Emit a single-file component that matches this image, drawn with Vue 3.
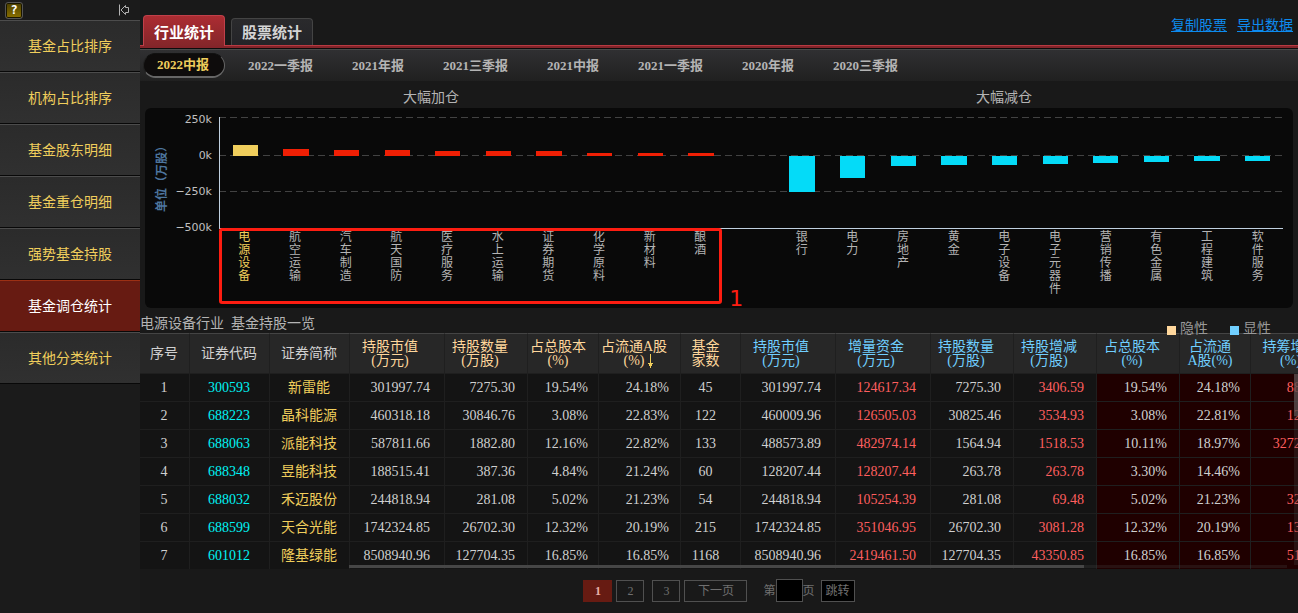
<script setup>
import { ref } from 'vue'

const menu = ['基金占比排序', '机构占比排序', '基金股东明细', '基金重仓明细', '强势基金持股', '基金调仓统计', '其他分类统计']
const activeMenu = ref('基金调仓统计')

const tabs = ['行业统计', '股票统计']
const activeTab = ref('行业统计')

const periods = ['2022中报', '2022一季报', '2021年报', '2021三季报', '2021中报', '2021一季报', '2020年报', '2020三季报']
const activePeriod = ref('2022中报')

const ticks = ['250k', '0k', '−250k', '−500k']
const gridLines = [0, 38, 74]

const slots = [
  { name: '电源设备', v: 11, on: true },
  { name: '航空运输', v: 7 },
  { name: '汽车制造', v: 6 },
  { name: '航天国防', v: 6 },
  { name: '医疗服务', v: 5 },
  { name: '水上运输', v: 5 },
  { name: '证券期货', v: 5 },
  { name: '化学原料', v: 3 },
  { name: '新材料', v: 3 },
  { name: '酿酒', v: 3 },
  { name: '', v: 0 },
  { name: '银行', v: -36 },
  { name: '电力', v: -22 },
  { name: '房地产', v: -10 },
  { name: '黄金', v: -9 },
  { name: '电子设备', v: -9 },
  { name: '电子元器件', v: -8 },
  { name: '营销传播', v: -7 },
  { name: '有色金属', v: -6 },
  { name: '工程建筑', v: -5 },
  { name: '软件服务', v: -5 },
]

const columns = [
  { k: 'c-no', a: '序号' },
  { k: 'c-code', a: '证券代码' },
  { k: 'c-name', a: '证券简称' },
  { k: 'c-value hid', a: '持股市值', b: '(万元)' },
  { k: 'c-qty hid', a: '持股数量', b: '(万股)' },
  { k: 'c-pct hid', a: '占总股本', b: '(%)' },
  { k: 'c-float hid', a: '占流通A股', b: '(%)', sort: true },
  { k: 'c-funds hid', a: '基金', b: '家数' },
  { k: 'c-value vis', a: '持股市值', b: '(万元)' },
  { k: 'c-value vis rise', a: '增量资金', b: '(万元)' },
  { k: 'c-qty vis', a: '持股数量', b: '(万股)' },
  { k: 'c-qty vis rise', a: '持股增减', b: '(万股)' },
  { k: 'c-total vis deep', a: '占总股本', b: '(%)' },
  { k: 'c-pct vis deep', a: '占流通', b: 'A股(%)' },
  { k: 'c-chips vis deep rise', a: '持筹增减', b: '(%)' },
]

const rows = [
  ['1', '300593', '新雷能', '301997.74', '7275.30', '19.54%', '24.18%', '45', '301997.74', '124617.34', '7275.30', '3406.59', '19.54%', '24.18%', '88.05%'],
  ['2', '688223', '晶科能源', '460318.18', '30846.76', '3.08%', '22.83%', '122', '460009.96', '126505.03', '30825.46', '3534.93', '3.08%', '22.81%', '12.95%'],
  ['3', '688063', '派能科技', '587811.66', '1882.80', '12.16%', '22.82%', '133', '488573.89', '482974.14', '1564.94', '1518.53', '10.11%', '18.97%', '3272.05%'],
  ['4', '688348', '昱能科技', '188515.41', '387.36', '4.84%', '21.24%', '60', '128207.44', '128207.44', '263.78', '263.78', '3.30%', '14.46%', ''],
  ['5', '688032', '禾迈股份', '244818.94', '281.08', '5.02%', '21.23%', '54', '244818.94', '105254.39', '281.08', '69.48', '5.02%', '21.23%', '32.84%'],
  ['6', '688599', '天合光能', '1742324.85', '26702.30', '12.32%', '20.19%', '215', '1742324.85', '351046.95', '26702.30', '3081.28', '12.32%', '20.19%', '13.04%'],
  ['7', '601012', '隆基绿能', '8508940.96', '127704.35', '16.85%', '16.85%', '1168', '8508940.96', '2419461.50', '127704.35', '43350.85', '16.85%', '16.85%', '51.39%'],
]
const jump = ref('')
</script>

<template>
  <div class="app">
    <aside class="side">
      <div class="side-top">
        <button class="help" aria-label="帮助">?</button>
        <button class="fold" aria-label="收起">
          <svg width="12" height="12" viewBox="0 0 12 12" fill="none" stroke="#b4b4b4">
            <path d="M1.500 0.500v11M3 6l4.500-4.500v2h3v5h-3v2z" />
          </svg>
        </button>
      </div>
      <nav>
        <a v-for="m in menu" :key="m" href="#" :class="{ on: m === activeMenu }" @click.prevent="activeMenu = m">{{ m }}</a>
      </nav>
    </aside>

    <main class="main">
      <header class="top">
        <div class="tabs">
          <button v-for="t in tabs" :key="t" :class="{ on: t === activeTab }" @click="activeTab = t">{{ t }}</button>
        </div>
        <div class="links"><a href="#">复制股票</a><a href="#">导出数据</a></div>
      </header>

      <div class="periods">
        <button v-for="p in periods" :key="p" :class="{ on: p === activePeriod }" @click="activePeriod = p">{{ p }}</button>
      </div>

      <div class="titles"><span>大幅加仓</span><span>大幅减仓</span></div>

      <section class="chart">
        <div class="unit">单位（万股）</div>
        <div class="ticks"><span v-for="t in ticks" :key="t">{{ t }}</span></div>
        <div class="plot">
          <svg class="grid" width="100%" height="111">
            <line v-for="y in gridLines" :key="y" x1="0" x2="100%" :y1="y + 0.5" :y2="y + 0.5" />
          </svg>
          <div class="bars">
            <div v-for="(s, i) in slots" :key="i" class="slot">
              <div class="up"><i v-if="s.v > 0" :class="{ on: s.on }" :style="{ height: s.v + 'px' }"></i></div>
              <div class="down"><i v-if="s.v < 0" :style="{ height: -s.v + 'px' }"></i></div>
            </div>
          </div>
          <div class="names">
            <div v-for="(s, i) in slots" :key="i" class="slot"><span :class="{ on: s.on }">{{ s.name }}</span></div>
          </div>
          <div class="mark"><b>1</b></div>
        </div>
      </section>

      <div class="caption">
        <span>电源设备行业&nbsp; 基金持股一览</span>
        <div class="legend"><span class="l-hid">隐性</span><span class="l-vis">显性</span></div>
      </div>

      <div class="table-wrap">
        <table>
          <thead>
            <tr>
              <th v-for="(c, i) in columns" :key="i" :class="c.k" scope="col">
                {{ c.a }}<template v-if="c.b"><br>{{ c.b }}</template>
                <svg v-if="c.sort" class="sort" width="7" height="14" viewBox="0 0 7 14"><path d="M3 0h1v9h2v1h-1v2h-1v2h-1v-2h-1v-2h-1v-1h2z" fill="#f0ce5c" /></svg>
              </th>
            </tr>
          </thead>
          <tbody>
            <tr v-for="r in rows" :key="r[0]">
              <td v-for="(c, i) in columns" :key="i" :class="c.k">{{ r[i] }}</td>
            </tr>
          </tbody>
        </table>
        <div class="h-track"><div class="h-thumb"></div></div>
        <div class="v-track"><div class="v-thumb"></div></div>
      </div>

      <footer class="pager">
        <button class="on">1</button>
        <button>2</button>
        <button class="third">3</button>
        <button class="next">下一页</button>
        <label>第<input v-model="jump" type="text" aria-label="页码">页</label>
        <button class="go">跳转</button>
      </footer>
    </main>
  </div>
</template>

<style>
body { background: #191919; }
</style>

<style scoped>
.app {
  display: flex;
  min-height: 100vh;
  overflow: hidden;
  background: #191919;
  color: #b4b4b4;
  font: 14px/20px "Liberation Serif", "Noto Sans CJK SC", sans-serif;
}
.app * { box-sizing: border-box; }
button { margin: 0; padding: 0; font: inherit; color: inherit; cursor: pointer; }

.side { flex: 0 0 140px; background: #1b1b1b; }
.side-top { display: flex; justify-content: space-between; align-items: center; height: 20px; padding: 0 10px 0 5px; }
.help {
  width: 18px; height: 17px;
  border: 1px solid #555;
  border-radius: 3px;
  background: linear-gradient(#4c4000, #8a7000);
  box-shadow: inset 0 0 0 1px #1a1600;
  color: #fff;
  font: bold 12px/15px "DejaVu Sans Mono", monospace;
}
.fold { display: flex; border: 0; background: none; }
.side nav { display: flex; flex-direction: column; }
.side nav a {
  height: 52px;
  border-top: 1px solid #4c4c4c;
  border-bottom: 1px solid #080808;
  background: linear-gradient(#2b2b2b, #303030);
  color: #f0ce5c;
  line-height: 52px;
  text-align: center;
  text-decoration: none;
}
.side nav a.on { border-top-color: #9c3014; background: #671b12; color: #fff; }

.main { flex: 1; min-width: 0; }
.top {
  display: flex;
  justify-content: space-between;
  height: 49px;
  padding: 0 5px 0 3px;
  border-bottom: 1px solid #0c0c0c;
  box-shadow: inset 0 -2px #84242a, inset 0 -3px #b83a42;
}
.tabs { display: flex; align-items: flex-end; gap: 6px; padding-bottom: 3px; }
.tabs button {
  width: 82px; height: 27px;
  border: 1px solid #444;
  border-bottom: 0;
  border-radius: 4px 4px 0 0;
  background: linear-gradient(#2a2a2c, #242428);
  color: #d4d4d4;
  font: bold 15px/26px "Noto Sans CJK SC", sans-serif;
}
.tabs button.on {
  height: 31px;
  margin-bottom: -1px;
  border-color: #c0404a;
  background: linear-gradient(#ac2c32, #84262a);
  color: #fff;
  line-height: 32px;
}
.links { display: flex; gap: 10px; padding-top: 16px; }
.links a { color: #0d8bee; }

.periods {
  display: flex;
  align-items: center;
  gap: 9px;
  height: 32px;
  padding: 0 3px;
  border-top: 1px solid #4a4a4a;
  background: linear-gradient(#303032, #202020);
}
.periods button {
  height: 25px;
  padding: 0 15px 0 13px;
  border: 1px solid transparent;
  border-radius: 13px;
  background: none;
  font: bold 13px/22px "Liberation Serif", "Noto Sans CJK SC", sans-serif;
}
.periods button.on { border-color: #111 #666 #666 #222; border-bottom-width: 2px; background: #0e0c0c; color: #f0ce5c; }

.titles { display: grid; grid-template-columns: 582fr 564fr; height: 27px; padding-right: 12px; line-height: 34px; text-align: center; }

.chart { display: flex; height: 200px; margin: 0 5px; padding: 9px 10px 0 9px; border-radius: 6px; background: #090909; }
.unit {
  width: 14px; height: 118px;
  writing-mode: vertical-rl;
  text-orientation: sideways;
  transform: rotate(180deg);
  text-align: center;
  color: #4d759e;
  font: bold 12px/14px "Noto Sans CJK SC", sans-serif;
}
.ticks { display: flex; flex: 0 0 44px; flex-direction: column; justify-content: space-between; height: 122px; margin-top: -4px; color: #c0c0c0; font: 11px/14px "DejaVu Sans", sans-serif; text-align: right; white-space: nowrap; }
.plot { position: relative; flex: 1; margin-left: 7px; }
.grid { position: absolute; left: 0; top: 0; }
.grid line { stroke: #424242; stroke-dasharray: 7 4; }
.bars, .names { position: relative; display: grid; grid-template-columns: repeat(21, 1fr); }
.bars { height: 112px; border-left: 1px solid #c0d0e0; border-bottom: 1px solid #c0d0e0; }
.up, .down { display: flex; justify-content: center; height: 39px; }
.up { align-items: flex-end; }
.down { height: 72px; }
.bars i { width: 50%; background: #f01f04; }
.bars i.on { background: #f0ce5c; }
.down i { background: #04dbf8; }
.names .slot { display: flex; justify-content: center; }
.names span { width: 12px; font: 12px/13px "Noto Sans CJK SC", sans-serif; word-break: break-all; }
.names .on { color: #f0ce5c; }
.mark { position: absolute; left: 0; top: 111px; width: 47.3%; height: 76px; border: 3px solid #fd1d11; border-radius: 3px; }
.mark b { position: absolute; left: 100%; bottom: -11px; margin-left: 10px; color: #fd1d11; font: 22px/26px "DejaVu Sans", sans-serif; }

.caption { position: relative; display: flex; justify-content: space-between; height: 25px; line-height: 32px; }
.legend { position: absolute; right: 27px; top: 11px; z-index: 1; display: flex; gap: 22px; line-height: 20px; }
.legend span { display: flex; align-items: center; gap: 4px; color: #999; }
.legend span::before { width: 9px; height: 9px; margin-top: 2px; background: #ffd79c; content: ""; }
.legend .l-vis::before { background: #70cfff; }

.table-wrap { position: relative; overflow: hidden; height: 236px; }
table { width: 1206px; border-spacing: 0; table-layout: fixed; }
th, td { padding: 0; border-right: 1px solid #1f1f1f; border-bottom: 1px solid #1f1f1f; white-space: nowrap; }
th {
  position: relative;
  height: 41px;
  border-top: 1px solid #444;
  background: #272727;
  color: #d0d0d0;
  font-weight: normal;
  line-height: 14px;
}
td { height: 28px; padding-top: 1px; background: #141414; color: #d0d0d0; line-height: 26px; text-align: right; }
.hid { width: 60px; }
th.hid { color: #ffd79c; }
th.vis { color: #70cfff; }
.c-no { width: 50px; padding-right: 1px; text-align: center; }
.c-code, .c-name { width: 80px; padding-right: 1px; text-align: center; }
td.c-code { color: #00f4f4; }
td.c-name { color: #f0ce5c; }
.c-value { width: 95px; padding-right: 14px; }
.c-qty { width: 83px; padding-right: 12px; }
.c-pct { width: 71px; padding-right: 10px; }
.c-float { width: 82px; padding-right: 11px; }
.c-funds { width: 60px; padding-right: 10px; text-align: center; }
.c-total { width: 83px; padding-right: 12px; }
.c-chips { width: 95px; padding-right: 15px; }
td.rise { color: #ff5f5f; }
td.deep { background: #1f0000; }
.sort { position: absolute; right: 26px; bottom: 5px; }
.h-track { position: absolute; left: 209px; right: 11px; bottom: 1px; height: 3px; background: rgba(70, 70, 70, 0.25); }
.h-thumb { width: 78.4%; height: 100%; background: #464646; }
.v-track { position: absolute; top: 41px; right: 0; bottom: 4px; width: 4px; background: rgba(70, 70, 70, 0.25); }
.v-thumb { height: 42px; background: rgba(90, 80, 80, 0.7); }

.pager { display: flex; align-items: center; justify-content: center; gap: 4px; padding-top: 10px; color: #707070; font-size: 12px; }
.pager button { width: 28px; height: 22px; border: 1px solid #505050; background: none; font-size: 12px; line-height: 20px; }
.pager .on { width: 29px; border-color: #671b12; background: #671b12; color: #e8b0a8; font-weight: bold; }
.pager .third { margin-left: 4px; }
.pager .next { width: 63px; }
.pager label { display: flex; align-items: center; margin: 0 2px 0 12px; }
.pager input { width: 27px; height: 23px; border: 1px solid #505050; background: #000; color: #ccc; text-align: center; }
.pager .go { width: 34px; background: #000; }
</style>
